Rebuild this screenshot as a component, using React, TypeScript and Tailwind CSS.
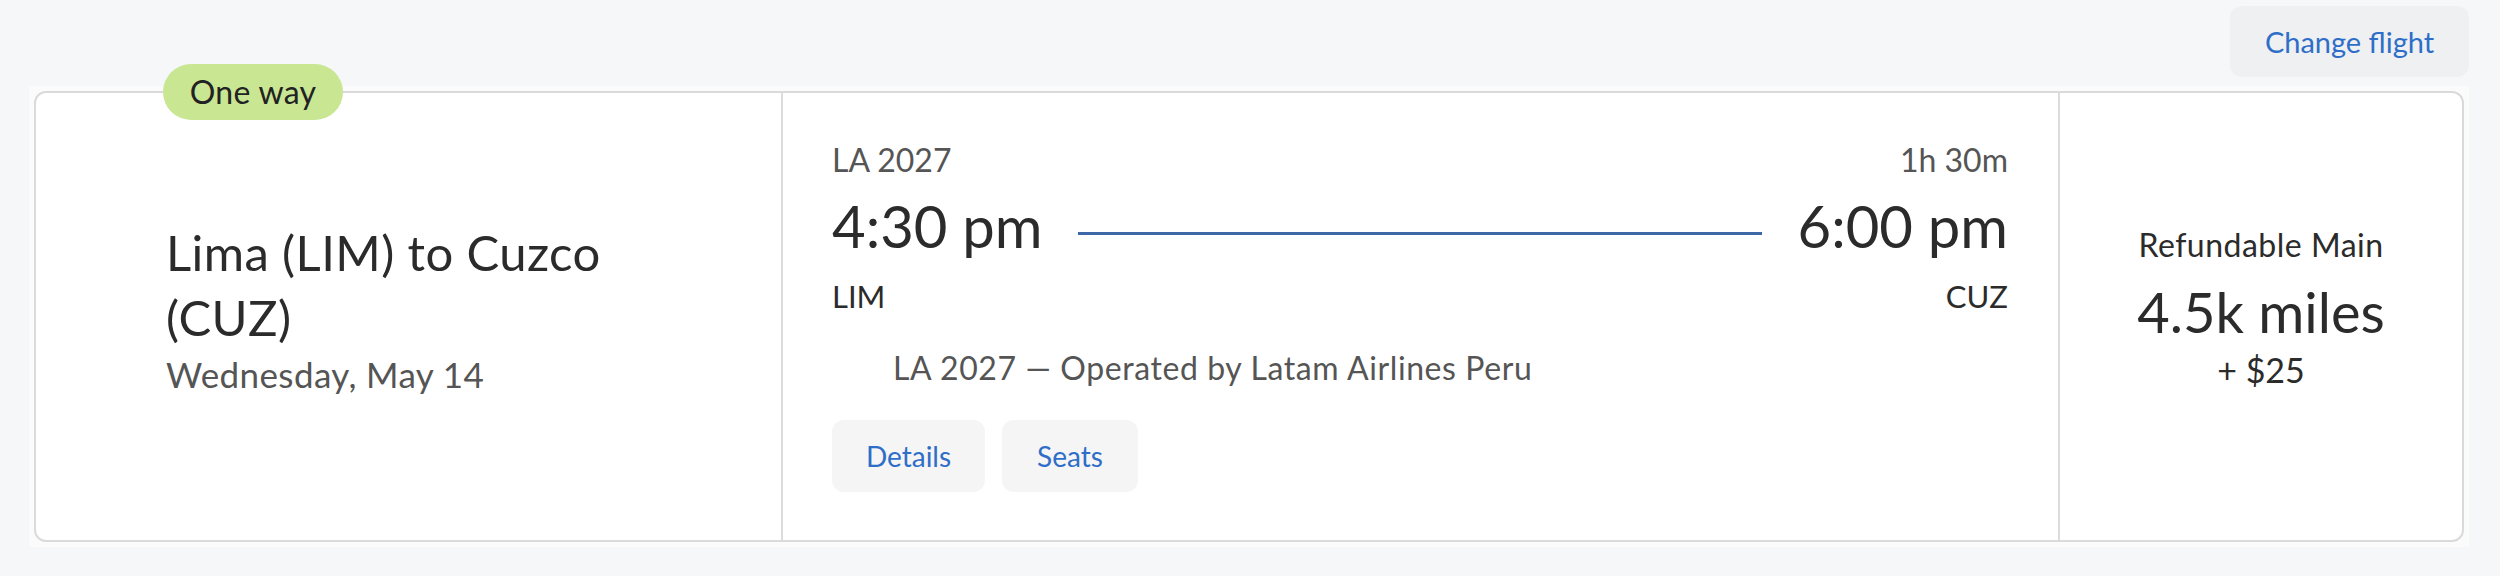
import React from "react";

export default function App() {
  return (
    <div className="min-h-[576px] w-[2500px] bg-[#f6f7f9] font-['Lato','Liberation_Sans',sans-serif] text-[#2b2b2b]">
      <div className="ml-[29px] w-[2440px]">
        {/* top bar */}
        <div className="flex h-[86px] justify-end pt-[6px]">
          <button className="h-[71px] w-[239px] rounded-[12px] bg-[#eef0f2] text-[29px] text-[#2e6ec8]">
            Change flight
          </button>
        </div>

        {/* card wrapper */}
        <div className="bg-[#fbfbfc] p-[5px]">
          <div className="relative flex rounded-[12px] border-2 border-[#dadada] bg-white">
            {/* badge */}
            <div className="absolute left-[127px] top-[-29px] flex h-[56px] w-[180px] items-center justify-center rounded-full bg-[#c9e693] text-[32px] tracking-[0.3px] text-[#222]">
              One way
            </div>

            {/* left column */}
            <div className="w-[745px] shrink-0 pl-[130px] pt-[127px]">
              <div className="w-[470px] text-[49px] leading-[65px] tracking-[0.4px] text-[#2b2b2b]">
                Lima (LIM) to Cuzco (CUZ)
              </div>
              <div className="text-[35px] leading-[48px] tracking-[0.4px] text-[#555]">
                Wednesday, May 14
              </div>
            </div>

            <div className="w-[2px] shrink-0 bg-[#dcdcdc]" />

            {/* middle column */}
            <div className="flex-1 pl-[49px] pr-[50px] pt-[47px] pb-[48px]">
              <div className="flex justify-between text-[32px] leading-[40px] text-[#555]">
                <span>LA 2027</span>
                <span>1h 30m</span>
              </div>
              <div className="mt-[14px] flex h-[64px] text-[58px] leading-[64px] text-[#2b2b2b]">
                <span className="shrink-0">4:30 pm</span>
                <div className="mx-[36px] mt-[38px] h-[3px] flex-1 self-start bg-[#3d67a6]" />
                <span className="shrink-0">6:00 pm</span>
              </div>
              <div className="mt-[18px] flex justify-between text-[31px] leading-[40px] text-[#2b2b2b]">
                <span>LIM</span>
                <span>CUZ</span>
              </div>
              <div className="mt-[32px] pl-[61px] text-[32px] leading-[40px] tracking-[0.6px] text-[#555]">
                LA 2027 — Operated by Latam Airlines Peru
              </div>
              <div className="mt-[32px] flex gap-[17px]">
                <button className="h-[72px] w-[153px] rounded-[12px] bg-[#f5f5f5] text-[28px] text-[#2e6ec8]">
                  Details
                </button>
                <button className="h-[72px] w-[136px] rounded-[12px] bg-[#f5f5f5] text-[28px] text-[#2e6ec8]">
                  Seats
                </button>
              </div>
            </div>

            <div className="w-[2px] shrink-0 bg-[#dcdcdc]" />

            {/* right column */}
            <div className="flex w-[402px] shrink-0 flex-col items-center pt-[132px]">
              <div className="text-[32px] leading-[40px] tracking-[0.5px] text-[#2b2b2b]">Refundable Main</div>
              <div className="mt-[17px] text-[56px] leading-[60px] text-[#2b2b2b]">4.5k miles</div>
              <div className="mt-[8px] text-[34px] leading-[40px] text-[#2b2b2b]">+ $25</div>
            </div>
          </div>
        </div>
      </div>
    </div>
  );
}
